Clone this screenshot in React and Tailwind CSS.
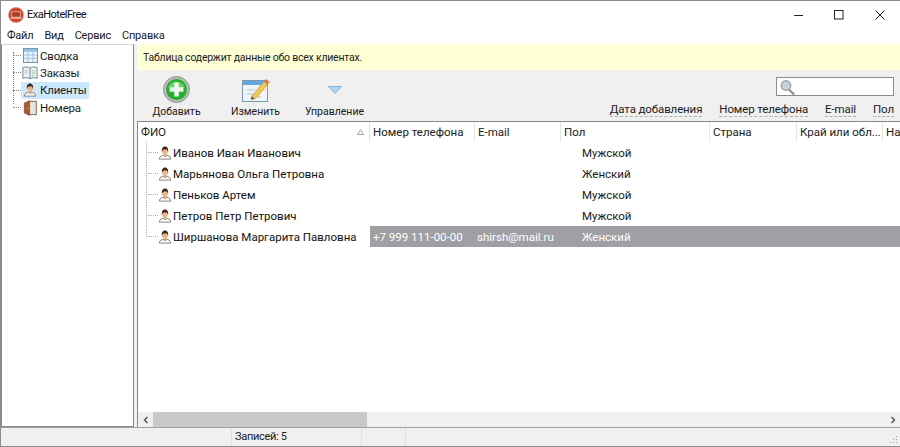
import React from "react";

const TableIcon = () => (
  <svg width="15" height="15" viewBox="0 0 16 16" className="shrink-0">
    <rect x="0.500" y="0.500" width="15" height="15" fill="#e8f2fb" stroke="#7d8a96" />
    <rect x="1" y="1" width="14" height="3" fill="#8cc0ea" />
    <path d="M5.500 4v11M10.500 4v11M1 7.500h14M1 11h14" stroke="#9cc4e6" />
  </svg>
);

const BookIcon = () => (
  <svg width="16" height="15" viewBox="0 0 18 16" className="shrink-0">
    <path d="M1 2.500c3-1 6-1 8 .5 2-1.500 5-1.500 8-.5v12c-3-1-6-1-8 .5-2-1.500-5-1.500-8-.5z" fill="#eef3f6" stroke="#66788a" />
    <path d="M9 3v12" stroke="#66788a" />
    <path d="M11 6h4M11 8.500h4M11 11h3" stroke="#8fb98f" />
    <path d="M3 6h4M3 8.500h4" stroke="#a9bccb" />
  </svg>
);

const PersonIcon = () => (
  <svg width="14" height="14" viewBox="0 0 16 16" className="shrink-0">
    <path d="M1.500 15c0-3.500 3-4.500 6.500-4.500s6.500 1 6.500 4.500z" fill="#fafafa" stroke="#77776f" />
    <path d="M6.300 9.500h3.400v2l-1.700 1.500-1.700-1.500z" fill="#e0a070" />
    <ellipse cx="8" cy="6" rx="3.200" ry="3.900" fill="#eeb48a" />
    <path d="M4.500 7C3.800 2.500 6 .6 8 .6s4.200 1.900 3.500 6.400c-.4-1.700-1-3-1.800-3.400-1.200.6-3 .6-3.500.3C5.600 4.400 4.800 5.500 4.500 7z" fill="#3f2416" />
  </svg>
);

const DoorIcon = () => (
  <svg width="15" height="16" viewBox="0 0 16 18" className="shrink-0">
    <rect x="5.500" y="1.500" width="9" height="15" fill="#e4e6e6" stroke="#7c5a3a" />
    <path d="M1 3.500 7 .8v16.400l-6-2.700z" fill="#a9592a" stroke="#7a3f1c" strokeWidth="0.700" />
    <circle cx="5.400" cy="9.500" r="0.700" fill="#f0d090" />
  </svg>
);

const AddIcon = () => (
  <svg width="27" height="27" viewBox="0 0 27 27">
    <circle cx="13.500" cy="13.500" r="13" fill="#b9bcb9" stroke="#8f938f" />
    <circle cx="13.500" cy="13.500" r="10.500" fill="#22b02c" />
    <path d="M5 11a9.500 9.500 0 0 1 17 0c-5 1.500-12 1.500-17 0z" fill="#69d267" />
    <path d="M11.200 6.500h4.600v4.700h4.700v4.600h-4.700v4.700h-4.600v-4.700H6.500v-4.600h4.700z" fill="#e9f6e9" />
  </svg>
);

const EditIcon = () => (
  <svg width="28" height="27" viewBox="0 0 28 27">
    <rect x="0.500" y="4.500" width="25" height="21" fill="#eef4f8" stroke="#7f97ab" />
    <rect x="1" y="5" width="24" height="4" fill="#62a7dd" />
    <path d="M5 14h8M5 18h13M10 21h9" stroke="#b4c4cf" />
    <path d="M10 20 22 5.500l3.500 3L13.500 22.500 9 23.500z" fill="#f5c94e" stroke="#b58a2a" strokeWidth="0.600" />
    <path d="M22 5.500 24 3l3.500 3-2 2.500z" fill="#e4774f" />
    <path d="M9 23.500l.8-3.200 2.600 2.200z" fill="#4a4a4a" />
  </svg>
);

const ChevronBlue = () => (
  <svg width="14" height="8" viewBox="0 0 14 8">
    <path d="M.5.500h13L7 7.500z" fill="#aed6f5" stroke="#6fa8d8" strokeWidth="0.800" />
  </svg>
);

const SearchIcon = () => (
  <svg width="15" height="16" viewBox="0 0 15 16">
    <path d="M9 10.500l4.500 4.500" stroke="#8a8f94" strokeWidth="2.200" strokeLinecap="round" />
    <circle cx="6" cy="6.500" r="4.700" fill="#c4d3e2" stroke="#9aa3ab" strokeWidth="1.500" />
  </svg>
);

const AppIcon = () => (
  <svg width="16" height="16" viewBox="0 0 15 15" className="shrink-0">
    <circle cx="7.500" cy="7.500" r="7.200" fill="#e0503c" />
    <circle cx="7.500" cy="7.500" r="5.800" fill="#cf3f2e" />
    <rect x="3.500" y="4.500" width="8" height="5" fill="#a8402c" stroke="#f0c4a8" strokeWidth="0.700" />
    <rect x="2.500" y="9.800" width="10" height="1.200" fill="#f2d6c0" />
  </svg>
);

const treeItems = [
  { label: "Сводка", icon: <TableIcon /> },
  { label: "Заказы", icon: <BookIcon /> },
  { label: "Клиенты", icon: <PersonIcon />, selected: true },
  { label: "Номера", icon: <DoorIcon /> },
];

const columns = [
  { title: "Номер телефона", width: "w-[105px]" },
  { title: "E-mail", width: "w-[86px]" },
  { title: "Пол", width: "w-[149px]" },
  { title: "Страна", width: "w-[87px]" },
  { title: "Край или обл...", width: "w-[86px]" },
  { title: "На", width: "w-[20px]" },
];

const clients = [
  { name: "Иванов Иван Иванович", gender: "Мужской" },
  { name: "Марьянова Ольга Петровна", gender: "Женский" },
  { name: "Пеньков Артем", gender: "Мужской" },
  { name: "Петров Петр Петрович", gender: "Мужской" },
  {
    name: "Ширшанова Маргарита Павловна",
    phone: "+7 999 111-00-00",
    email: "shirsh@mail.ru",
    gender: "Женский",
    selected: true,
  },
];

const groupFields = ["Дата добавления", "Номер телефона", "E-mail", "Пол"];

export default function App() {
  return (
    <div className="w-[900px] h-[447px] overflow-hidden flex flex-col bg-[#f0f0f0] border border-[#8c8c8c] border-r-0 text-[11px] leading-[16px] text-[#1a1a1a] font-['Roboto',sans-serif]">
      {/* Title bar */}
      <div className="h-[27px] bg-white flex items-center shrink-0 pl-[7px]">
        <AppIcon />
        <span className="ml-[3px] text-[#111] tracking-[-0.5px]">ExaHotelFree</span>
        <div className="ml-auto flex items-center">
          <svg width="10" height="10" viewBox="0 0 10 10" className="mr-[30px]">
            <path d="M0 5.500h9" stroke="#222" />
          </svg>
          <svg width="10" height="10" viewBox="0 0 10 10" className="mr-[31px]">
            <rect x="0.500" y="0.500" width="8.500" height="8.500" fill="none" stroke="#222" />
          </svg>
          <svg width="10" height="10" viewBox="0 0 10 10" className="mr-[15px]">
            <path d="M.5.500l9 9M9.500.500l-9 9" stroke="#222" />
          </svg>
        </div>
      </div>

      {/* Menu */}
      <div className="h-[16px] bg-white flex items-center gap-[11px] pl-[6px] shrink-0 tracking-[-0.2px]">
        <span>Файл</span>
        <span>Вид</span>
        <span>Сервис</span>
        <span>Справка</span>
      </div>

      <div className="flex-1 flex min-h-0 bg-[#f0f0f0]">
        {/* Tree */}
        <div className="w-[133px] shrink-0 bg-white border border-[#828790] border-t-[#d8d8d8] pt-[2px] pl-[11px] relative text-[11.5px] tracking-[-0.2px]">
          <div className="border-l border-dotted border-[#808080] h-[52px] absolute left-[11px] top-[7px]" />
          {treeItems.map((item) => (
            <div key={item.label} className="flex items-center h-[17.300px]">
              <div className="w-[8px] border-t border-dotted border-[#808080] shrink-0" />
              <div
                className={`h-[17px] flex items-center pr-[3px] ${
                  item.selected ? "bg-[#cce8ff]" : ""
                }`}
              >
                <div className="w-[18px] flex justify-center shrink-0">{item.icon}</div>
                <span className="ml-px">{item.label}</span>
              </div>
            </div>
          ))}
        </div>

        {/* Main */}
        <div className="flex-1 flex flex-col min-w-0 ml-[3px]">
          <div className="h-[26px] bg-[#ffffd5] flex items-center pl-[6px] pt-px shrink-0 text-[10.5px] tracking-[-0.22px]">
            Таблица содержит данные обо всех клиентах.
          </div>

          {/* Toolbar */}
          <div className="h-[51px] shrink-0 flex">
            <div className="flex pt-[5px] text-[10.5px]">
              <div className="w-[79px] flex flex-col items-center">
                <div className="h-[29px] flex items-center"><AddIcon /></div>
                <span>Добавить</span>
              </div>
              <div className="w-[79px] flex flex-col items-center">
                <div className="h-[29px] flex items-center"><EditIcon /></div>
                <span>Изменить</span>
              </div>
              <div className="w-[79px] flex flex-col items-center">
                <div className="h-[29px] flex items-center"><ChevronBlue /></div>
                <span>Управление</span>
              </div>
            </div>
            <div className="ml-auto flex flex-col items-end pr-[6px] pt-[7px] text-[11.5px] tracking-[-0.12px]">
              <div className="w-[118px] h-[19px] bg-white border border-[#8c8c8c] flex items-center pl-[3px]">
                <SearchIcon />
              </div>
              <div className="flex gap-[17px] mt-[6px]">
                {groupFields.map((f) => (
                  <span key={f} className="border-b border-dashed border-[#b0b0b0] leading-[14px]">
                    {f}
                  </span>
                ))}
              </div>
            </div>
          </div>

          {/* Grid */}
          <div className="flex-1 min-h-0 bg-white border-t border-l border-[#828790] flex flex-col text-[11.5px]">
            <div className="flex-1 min-h-0 overflow-hidden">
              <div className="flex h-[20px] w-[800px]">
                <div className="w-[232px] shrink-0 flex items-center justify-between pl-[3px] pr-[5px] border-r border-[#e5e5e5]">
                  <span>ФИО</span>
                  <svg width="7" height="6" viewBox="0 0 7 6">
                    <path d="M3.500.500l3 5h-6z" fill="none" stroke="#a0a0a0" />
                  </svg>
                </div>
                {columns.map((c) => (
                  <div
                    key={c.title}
                    className={`${c.width} shrink-0 flex items-center pl-[3px] border-r border-[#e5e5e5] whitespace-nowrap overflow-hidden`}
                  >
                    {c.title}
                  </div>
                ))}
              </div>
              {clients.map((client, i) => (
                <div key={client.name} className="flex h-[21px] items-center">
                  <div className="w-[232px] shrink-0 flex items-center h-full pl-[10px] relative">
                    <div
                      className={`border-l border-dotted border-[#b0b0b0] absolute left-[8px] top-0 ${
                        i === clients.length - 1 ? "h-[11px]" : "h-full"
                      }`}
                    />
                    <div className="w-[10px] border-t border-dotted border-[#b0b0b0] shrink-0" />
                    <PersonIcon />
                    <span className="ml-[1px] whitespace-nowrap text-[#111]">{client.name}</span>
                  </div>
                  <div
                    className={`flex-1 flex h-full items-center ${
                      client.selected ? "bg-[#a0a0a4] text-white" : ""
                    }`}
                  >
                    <div className="w-[105px] shrink-0 pl-[3px] whitespace-nowrap">{client.phone}</div>
                    <div className="w-[105px] shrink-0 pl-[2px] whitespace-nowrap">{client.email}</div>
                    <div className="pl-[2px]">{client.gender}</div>
                  </div>
                </div>
              ))}
            </div>

            {/* Scrollbar */}
            <div className="h-[15px] bg-[#f0f0f0] flex items-center shrink-0">
              <div className="w-[15px] flex justify-center shrink-0">
                <svg width="6" height="8" viewBox="0 0 6 8">
                  <path d="M4.500 1 1.500 4l3 3" fill="none" stroke="#505050" strokeWidth="1.400" />
                </svg>
              </div>
              <div className="w-[214px] h-full bg-[#c9c9c9]" />
              <div className="ml-auto w-[15px] flex justify-center shrink-0">
                <svg width="6" height="8" viewBox="0 0 6 8">
                  <path d="M1.500 1l3 3-3 3" fill="none" stroke="#505050" strokeWidth="1.400" />
                </svg>
              </div>
            </div>
          </div>
        </div>
      </div>

      {/* Status bar */}
      <div className="h-[19px] shrink-0 bg-[#f0f0f0] border-t border-[#a0a0a0] flex items-center relative">
        <div className="w-[231px] h-full border-r border-[#e0e0e0] shrink-0" />
        <div className="w-[130px] h-full pl-[3px] flex items-center border-r border-[#e0e0e0] shrink-0 tracking-[-0.3px]">
          Записей: 5
        </div>
        <div className="w-[44px] h-full border-r border-[#e0e0e0] shrink-0" />
        <svg width="9" height="9" viewBox="0 0 9 9" className="absolute right-[2px] bottom-[2px]">
          <path d="M7 1h1v1H7zM4 4h1v1H4zM7 4h1v1H7zM1 7h1v1H1zM4 7h1v1H4zM7 7h1v1H7z" fill="#a0a0a0" />
        </svg>
      </div>
    </div>
  );
}
